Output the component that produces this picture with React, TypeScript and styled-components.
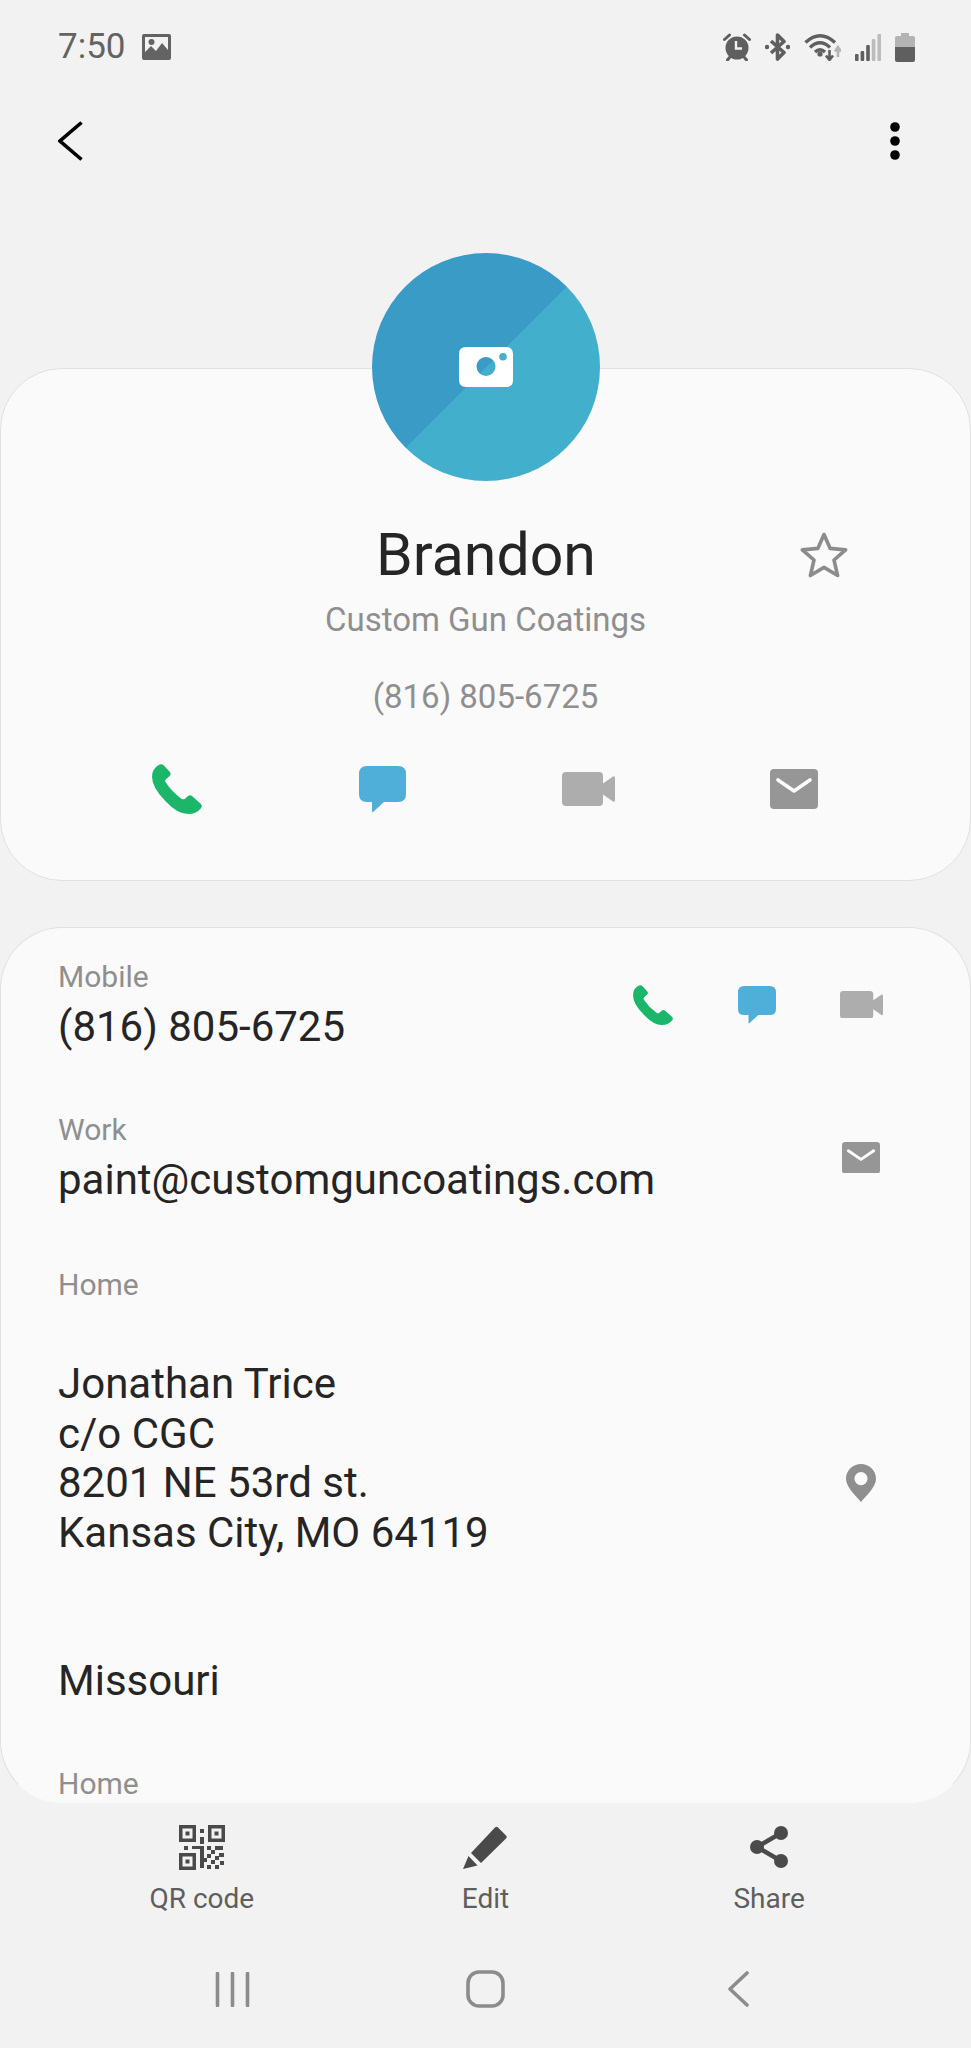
import React from 'react';
import styled, { createGlobalStyle } from 'styled-components';

const GlobalStyle = createGlobalStyle`
  html, body {
    margin: 0;
    padding: 0;
    background: #f2f2f2;
    font-family: Roboto, 'Liberation Sans', sans-serif;
  }
  * {
    box-sizing: border-box;
  }
`;

const Page = styled.div`
  width: 971px;
  height: 2048px;
  display: flex;
  flex-direction: column;
  overflow: hidden;
  background: #f2f2f2;
`;

const StatusBar = styled.div`
  height: 94px;
  flex: none;
  display: flex;
  align-items: center;
  justify-content: space-between;
  padding: 0 56px 0 58px;
`;

const StatusLeft = styled.div`
  display: flex;
  align-items: center;
  gap: 16px;
`;

const Time = styled.span`
  font-size: 35px;
  line-height: 40px;
  color: #636363;
`;

const StatusRight = styled.div`
  display: flex;
  align-items: center;
  gap: 14px;
`;

const TopBar = styled.div`
  height: 94px;
  flex: none;
  display: flex;
  align-items: center;
  justify-content: space-between;
  padding: 0 71px 0 58px;
`;

const Card = styled.section<{ $grow?: boolean }>`
  background: #fafafa;
  border: 1px solid #e1e1e1;
  border-radius: 62px;
  ${(props) =>
    props.$grow
      ? `
    height: 876px;
    flex: none;
    overflow: hidden;
    margin-top: 46px;
    border-bottom-color: #fafafa;
    padding: 29px 0 0;
  `
      : ''}
`;

const ProfileCard = styled(Card)`
  height: 513px;
  flex: none;
  margin-top: 180px;
  display: flex;
  flex-direction: column;
  align-items: center;
`;

const Avatar = styled.div`
  width: 228px;
  height: 228px;
  margin-top: -116px;
  flex: none;
  border-radius: 50%;
  display: flex;
  align-items: center;
  justify-content: center;
  background: linear-gradient(135deg, #3a9bc7 50%, #42b0cc 50%);
`;

const NameRow = styled.div`
  width: 100%;
  display: grid;
  grid-template-columns: 1fr auto 1fr;
  align-items: center;
  padding: 0 122px 0 123px;
  margin-top: 41px;
`;

const Name = styled.h1`
  margin: 0;
  font-size: 59px;
  line-height: 66px;
  font-weight: 400;
  color: #252525;
`;

const StarSlot = styled.div`
  grid-column: 3;
  justify-self: end;
  display: flex;
`;

const Company = styled.div`
  margin-top: 12px;
  font-size: 33px;
  line-height: 40px;
  color: #8f8f8f;
`;

const ProfilePhone = styled.div`
  margin-top: 37px;
  font-size: 33px;
  line-height: 40px;
  color: #8f8f8f;
`;

const ActionGrid = styled.div`
  width: 100%;
  display: grid;
  grid-template-columns: repeat(4, 1fr);
  padding: 0 73px;
  margin-top: 42px;
`;

const ActionCell = styled.div`
  height: 60px;
  display: flex;
  align-items: center;
  justify-content: center;
`;

const Row = styled.div<{ $gap?: number }>`
  display: flex;
  align-items: center;
  justify-content: space-between;
  padding: 0 57px;
  margin-top: ${(props) => props.$gap ?? 0}px;
`;

const RowText = styled.div`
  display: flex;
  flex-direction: column;
`;

const Label = styled.div`
  font-size: 30px;
  line-height: 40px;
  color: #8f8f8f;
`;

const Value = styled.div<{ $top?: number }>`
  font-size: 42px;
  line-height: 50px;
  color: #252525;
  margin-top: ${(props) => props.$top ?? 5}px;
`;

const Address = styled(Value)`
  line-height: 49.5px;
`;

const RowActions = styled.div<{ $lift?: number }>`
  display: flex;
  margin-bottom: ${(props) => props.$lift ?? 0}px;
`;

const RowAction = styled.div`
  width: 104px;
  height: 50px;
  display: flex;
  align-items: center;
  justify-content: center;
`;

const Toolbar = styled.nav`
  flex: none;
  display: grid;
  grid-template-columns: repeat(3, 1fr);
  padding: 21px 60px 0;
`;

const ToolButton = styled.div`
  display: flex;
  flex-direction: column;
  align-items: center;
`;

const ToolIcon = styled.div`
  height: 46px;
  display: flex;
  align-items: center;
  justify-content: center;
`;

const ToolLabel = styled.span`
  margin-top: 11px;
  font-size: 28px;
  line-height: 36px;
  color: #5e5e5e;
`;

const NavBar = styled.div`
  flex: none;
  display: grid;
  grid-template-columns: repeat(3, 253px);
  justify-content: center;
  padding-top: 53px;
`;

const NavSlot = styled.div`
  height: 38px;
  display: flex;
  align-items: center;
  justify-content: center;
`;

const PhoneIcon = ({ size }: { size: number }) => (
  <svg width={size} height={size} viewBox="0 0 150 150">
    <path
      fill="#1cb66a"
      d="M20 3Q28 -2 35 4L53 23Q59 30 53 36L42 46Q38 50 41 55Q60 84 88 104Q94 108 99 104L108 96Q114 91 120 96L146 119Q152 125 148 131Q134 150 108 150Q76 150 40 111Q0 70 0 38Q0 15 20 3Z"
    />
  </svg>
);

const MessageIcon = ({ width }: { width: number }) => (
  <svg width={width} height={width} viewBox="0 0 47 47">
    <path
      fill="#4fafd8"
      d="M8 0H39Q47 0 47 8V28Q47 36 39 36H25L14 46Q13 47 13 45V36H8Q0 36 0 28V8Q0 0 8 0Z"
    />
  </svg>
);

const VideoIcon = ({ width }: { width: number }) => (
  <svg width={width} height={(width * 34) / 53} viewBox="0 0 53 34">
    <path
      fill="#adadad"
      d="M4 0H37Q41 0 41 4V30Q41 34 37 34H4Q0 34 0 30V4Q0 0 4 0ZM41 11.5L51 4.5Q53 3.5 53 6V28Q53 30.5 51 29.5L41 22.5Z"
    />
  </svg>
);

const MailIcon = ({ width }: { width: number }) => (
  <svg width={width} height={(width * 40) / 48} viewBox="0 0 48 40">
    <rect width="48" height="40" rx="4" fill="#969696" />
    <path d="M8 11L24 22L40 11" fill="none" stroke="#fff" strokeWidth="3.6" strokeLinecap="round" strokeLinejoin="round" />
  </svg>
);

const PinIcon = () => (
  <svg width="30" height="38" viewBox="0 0 30 38">
    <path
      fill="#8f8f8f"
      fillRule="evenodd"
      d="M15 0C23.3 0 30 6.6 30 14.6C30 23 21 31 15 38C9 31 0 23 0 14.6C0 6.6 6.7 0 15 0ZM15 8A6.6 6.6 0 1 0 15 21.2A6.6 6.6 0 1 0 15 8Z"
    />
  </svg>
);

const StarIcon = () => (
  <svg width="48" height="48" viewBox="0 0 48 48">
    <path
      d="M24 3.5L30.2 17.4L45.6 18.9L34 29L37.6 44.5L24 36.4L10.4 44.5L14 29L2.4 18.9L17.8 17.4Z"
      fill="none"
      stroke="#8c8c8c"
      strokeWidth="3.6"
      strokeLinejoin="round"
    />
  </svg>
);

const CameraIcon = () => (
  <svg width="54" height="40" viewBox="0 0 54 40">
    <path
      fill="#fff"
      fillRule="evenodd"
      d="M7 0H47Q54 0 54 7V33Q54 40 47 40H7Q0 40 0 33V7Q0 0 7 0ZM27 10A9.5 9.5 0 1 0 27 29A9.5 9.5 0 1 0 27 10ZM44 6A3.8 3.8 0 1 0 44 13.6A3.8 3.8 0 1 0 44 6Z"
    />
  </svg>
);

const PictureIcon = () => (
  <svg width="29" height="26" viewBox="0 0 29 26">
    <path
      fill="#636363"
      fillRule="evenodd"
      d="M2 0H27Q29 0 29 2V24Q29 26 27 26H2Q0 26 0 24V2Q0 0 2 0ZM3 3V18L9 12L14 17L20 9L26 16V3ZM9.5 5A3 3 0 1 0 9.5 11A3 3 0 1 0 9.5 5Z"
    />
  </svg>
);

const AlarmIcon = () => (
  <svg width="28" height="28" viewBox="0 0 28 28">
    <circle cx="14" cy="15" r="11.5" fill="#5f5f5f" />
    <path d="M1.5 6.5L6.5 2M26.5 6.5L21.5 2M6.5 24.5L4.5 27M21.5 24.5L23.5 27" stroke="#5f5f5f" strokeWidth="3" strokeLinecap="round" />
    <path d="M13 8V15.5H19" fill="none" stroke="#f2f2f2" strokeWidth="2.4" />
  </svg>
);

const BluetoothIcon = () => (
  <svg width="25" height="28" viewBox="0 0 25 28">
    <path d="M6 8L19 19.5L12.5 26V2L19 8.5L6 20" fill="none" stroke="#5f5f5f" strokeWidth="3.6" strokeLinejoin="round" />
    <circle cx="2" cy="14" r="2.2" fill="#5f5f5f" />
    <circle cx="23" cy="14" r="2.2" fill="#5f5f5f" />
  </svg>
);

const WifiIcon = () => (
  <svg width="37" height="28" viewBox="0 0 37 28">
    <g fill="none" stroke="#5f5f5f" strokeWidth="3.4">
      <path d="M1.5 9.5Q16 -4 31 9.5" />
      <path d="M6 14.5Q16 5 26 14.5" />
      <path d="M11 19Q16 14.5 21 19" />
    </g>
    <circle cx="16" cy="21" r="2.6" fill="#5f5f5f" />
    <path d="M25.5 17V26M22 22.5L25.5 27L29 22.5" fill="none" stroke="#5f5f5f" strokeWidth="2.6" />
    <path d="M34 24V15M31 18.5L34 14L37 18.5" fill="none" stroke="#b5b5b5" strokeWidth="2.6" />
  </svg>
);

const SignalIcon = () => (
  <svg width="26" height="28" viewBox="0 0 26 28">
    <rect x="0" y="21" width="3.6" height="7" rx="1" fill="#5f5f5f" />
    <rect x="5.6" y="18" width="3.6" height="10" rx="1" fill="#5f5f5f" />
    <rect x="11.2" y="12" width="3.6" height="16" rx="1" fill="#5f5f5f" />
    <rect x="16.8" y="6" width="3.6" height="22" rx="1" fill="#bcbcbc" />
    <rect x="22.4" y="1" width="3.6" height="27" rx="1" fill="#bcbcbc" />
  </svg>
);

const BatteryIcon = () => (
  <svg width="20" height="29" viewBox="0 0 20 29">
    <rect x="6" y="0" width="8" height="4" fill="#b3b3b3" />
    <path d="M2 3H18Q20 3 20 5V14H0V5Q0 3 2 3Z" fill="#b3b3b3" />
    <path d="M0 14H20V27Q20 29 18 29H2Q0 29 0 27Z" fill="#5f5f5f" />
  </svg>
);

const BackChevron = () => (
  <svg width="25" height="40" viewBox="0 0 25 40">
    <path d="M23.5 1.5L2 20L23.5 38.5" fill="none" stroke="#000" strokeWidth="3.6" />
  </svg>
);

const MoreDots = () => (
  <svg width="10" height="40" viewBox="0 0 10 40">
    <circle cx="5" cy="6" r="4.8" fill="#000" />
    <circle cx="5" cy="20" r="4.8" fill="#000" />
    <circle cx="5" cy="34" r="4.8" fill="#000" />
  </svg>
);

const QrIcon = () => (
  <svg width="46" height="45" viewBox="0 0 46 45" fill="#4a4a4a">
    <path fillRule="evenodd" d="M0 0H17V17H0ZM3.5 3.5V13.5H13.5V3.5ZM29 0H46V17H29ZM32.5 3.5V13.5H42.5V3.5ZM0 28H17V45H0ZM3.5 31.5V41.5H13.5V31.5Z" />
    <rect x="6.5" y="6.5" width="4" height="4" />
    <rect x="35.5" y="6.5" width="4" height="4" />
    <rect x="6.5" y="34.5" width="4" height="4" />
    <rect x="21" y="4" width="4" height="4" />
    <rect x="21" y="12" width="4" height="7" />
    <rect x="5" y="21" width="4" height="4" />
    <rect x="13" y="21" width="8" height="3" />
    <rect x="21" y="21" width="4" height="22" />
    <rect x="28" y="21" width="4" height="4" />
    <rect x="36" y="21" width="8" height="4" />
    <rect x="32" y="25" width="4" height="4" />
    <rect x="40" y="28" width="5" height="4" />
    <rect x="28" y="29" width="4" height="4" />
    <rect x="36" y="31" width="4" height="4" />
    <rect x="25" y="33" width="3" height="4" />
    <rect x="32" y="35" width="4" height="4" />
    <rect x="41" y="36" width="4" height="4" />
    <rect x="28" y="40" width="4" height="4" />
    <rect x="36" y="40" width="4" height="4" />
  </svg>
);

const EditIcon = () => (
  <svg width="44" height="43" viewBox="0 0 44 43">
    <path fill="#4a4a4a" d="M32 1.5Q33.5 0 35 1.5L43 9.5Q44.5 11 43 12.5L18 37L8 27ZM5.5 30L14.5 39.5L0 43Z" />
  </svg>
);

const ShareIcon = () => (
  <svg width="38" height="42" viewBox="0 0 38 42">
    <path d="M31 7L7 21L31 35" fill="none" stroke="#4a4a4a" strokeWidth="4.4" />
    <circle cx="31" cy="7" r="7" fill="#4a4a4a" />
    <circle cx="7" cy="21" r="7" fill="#4a4a4a" />
    <circle cx="31" cy="35" r="7" fill="#4a4a4a" />
  </svg>
);

const RecentsIcon = () => (
  <svg width="35" height="35" viewBox="0 0 35 35">
    <path d="M2.5 1.5V33.5M17.5 1.5V33.5M32.5 1.5V33.5" stroke="#8c8c8c" strokeWidth="3.6" strokeLinecap="round" />
  </svg>
);

const HomeIcon = () => (
  <svg width="39" height="38" viewBox="0 0 39 38">
    <rect x="2" y="2" width="35" height="34" rx="11" fill="none" stroke="#8c8c8c" strokeWidth="3.6" />
  </svg>
);

const NavBackIcon = () => (
  <svg width="22" height="36" viewBox="0 0 22 36">
    <path d="M19 2L2 18L19 34" fill="none" stroke="#8c8c8c" strokeWidth="3.6" strokeLinecap="round" strokeLinejoin="round" />
  </svg>
);

const App = () => {
  return (
    <Page>
      <GlobalStyle />
      <StatusBar>
        <StatusLeft>
          <Time>7:50</Time>
          <PictureIcon />
        </StatusLeft>
        <StatusRight>
          <AlarmIcon />
          <BluetoothIcon />
          <WifiIcon />
          <SignalIcon />
          <BatteryIcon />
        </StatusRight>
      </StatusBar>
      <TopBar>
        <BackChevron />
        <MoreDots />
      </TopBar>

      <ProfileCard>
        <Avatar>
          <CameraIcon />
        </Avatar>
        <NameRow>
          <span />
          <Name>Brandon</Name>
          <StarSlot>
            <StarIcon />
          </StarSlot>
        </NameRow>
        <Company>Custom Gun Coatings</Company>
        <ProfilePhone>(816) 805-6725</ProfilePhone>
        <ActionGrid>
          <ActionCell>
            <PhoneIcon size={50} />
          </ActionCell>
          <ActionCell>
            <MessageIcon width={47} />
          </ActionCell>
          <ActionCell>
            <VideoIcon width={53} />
          </ActionCell>
          <ActionCell>
            <MailIcon width={48} />
          </ActionCell>
        </ActionGrid>
      </ProfileCard>

      <Card $grow>
        <Row>
          <RowText>
            <Label>Mobile</Label>
            <Value>(816) 805-6725</Value>
          </RowText>
          <RowActions>
            <RowAction>
              <PhoneIcon size={40} />
            </RowAction>
            <RowAction>
              <MessageIcon width={38} />
            </RowAction>
            <RowAction>
              <VideoIcon width={43} />
            </RowAction>
          </RowActions>
        </Row>
        <Row $gap={58}>
          <RowText>
            <Label>Work</Label>
            <Value>paint@customguncoatings.com</Value>
          </RowText>
          <RowActions>
            <RowAction>
              <MailIcon width={38} />
            </RowAction>
          </RowActions>
        </Row>
        <Row $gap={60}>
          <RowText>
            <Label>Home</Label>
            <Address $top={54}>
              Jonathan Trice
              <br />
              c/o CGC
              <br />
              8201 NE 53rd st.
              <br />
              Kansas City, MO 64119
            </Address>
            <Value $top={99}>Missouri</Value>
          </RowText>
          <RowActions $lift={5}>
            <RowAction>
              <PinIcon />
            </RowAction>
          </RowActions>
        </Row>
        <Row $gap={58}>
          <Label>Home</Label>
        </Row>
      </Card>

      <Toolbar>
        <ToolButton>
          <ToolIcon>
            <QrIcon />
          </ToolIcon>
          <ToolLabel>QR code</ToolLabel>
        </ToolButton>
        <ToolButton>
          <ToolIcon>
            <EditIcon />
          </ToolIcon>
          <ToolLabel>Edit</ToolLabel>
        </ToolButton>
        <ToolButton>
          <ToolIcon>
            <ShareIcon />
          </ToolIcon>
          <ToolLabel>Share</ToolLabel>
        </ToolButton>
      </Toolbar>
      <NavBar>
        <NavSlot>
          <RecentsIcon />
        </NavSlot>
        <NavSlot>
          <HomeIcon />
        </NavSlot>
        <NavSlot>
          <NavBackIcon />
        </NavSlot>
      </NavBar>
    </Page>
  );
};

export default App;
